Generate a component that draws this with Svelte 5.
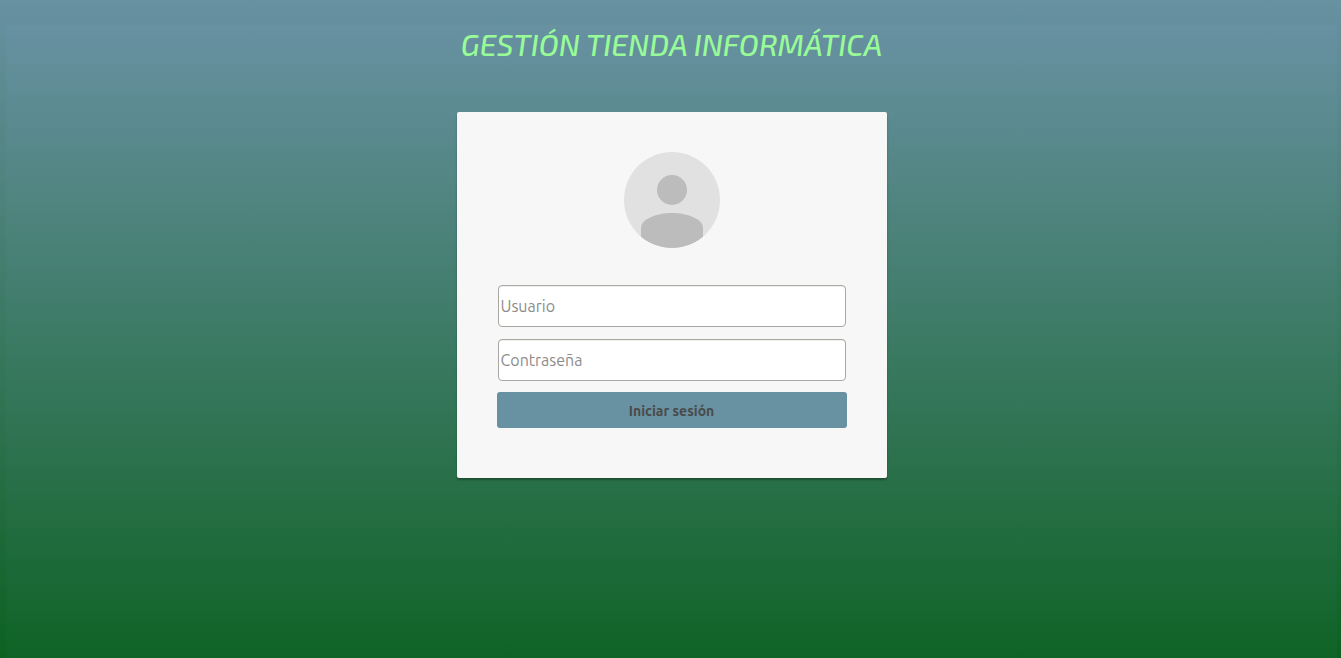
<script>
  let username = $state('');
  let password = $state('');

  function submit(event) {
    event.preventDefault();
  }
</script>

<main class="page">
  <h1>GESTIÓN TIENDA INFORMÁTICA</h1>

  <section class="card">
    <svg class="avatar" viewBox="0 0 96 96" aria-hidden="true">
      <defs>
        <clipPath id="avatar-disc"><circle cx="48" cy="48" r="48" /></clipPath>
      </defs>
      <circle cx="48" cy="48" r="48" fill="#e1e1e1" />
      <g clip-path="url(#avatar-disc)" fill="#bcbcbc">
        <circle cx="48" cy="38" r="15" />
        <path d="M17 96V76C17 67 33 61 48 61S79 67 79 76V96Z" />
      </g>
    </svg>

    <form onsubmit={submit}>
      <input type="text" placeholder="Usuario" aria-label="Usuario" bind:value={username} />
      <input type="password" placeholder="Contraseña" aria-label="Contraseña" bind:value={password} />
      <button type="submit">Iniciar sesión</button>
    </form>
  </section>
</main>

<style>
  :global(html) {
    min-height: 100%;
    background: linear-gradient(rgb(104, 145, 162), rgb(12, 97, 33)) no-repeat;
  }

  .page {
    box-sizing: border-box;
    min-height: calc(100vh - 25px);
    margin: 25px 4px 0 6px;
    background: linear-gradient(rgb(104, 145, 162), rgb(12, 97, 33) 104%);
    display: flex;
    flex-direction: column;
    align-items: center;
    font-family: Ubuntu, "Noto Sans", sans-serif;
  }

  h1 {
    margin: 0;
    color: #98fb98;
    font-family: "Exo 2", Roboto, sans-serif;
    font-size: 30px;
    font-style: italic;
    font-weight: 500;
    line-height: 38px;
    text-align: center;
  }

  .card {
    box-sizing: border-box;
    width: 100%;
    max-width: 430px;
    margin: 49px 0 25px;
    padding: 40px 40px 50px;
    background: #f7f7f7;
    border-radius: 2px;
    box-shadow: 0 2px 2px rgba(0, 0, 0, 0.3);
  }

  .avatar {
    display: block;
    width: 96px;
    height: 96px;
    margin: 0 auto 37px;
  }

  form {
    display: flex;
    flex-direction: column;
  }

  input {
    box-sizing: border-box;
    height: 42px;
    margin: 0 1px 12px;
    padding: 0 2px;
    border: 1px solid #aaa7a3;
    border-radius: 4px;
    background: #fff;
    box-shadow: inset 0 1px #f0efed;
    color: #404040;
    font: 16px Ubuntu, "Noto Sans", sans-serif;
  }

  input::placeholder {
    color: #8c8c8c;
    opacity: 1;
  }

  button {
    height: 36px;
    margin-top: -1px;
    padding: 2px 0 0;
    border: 0;
    border-radius: 3px;
    background: rgb(104, 145, 162);
    color: #4a4a4a;
    font: bold 14px Ubuntu, "Noto Sans", sans-serif;
    cursor: pointer;
  }
</style>
